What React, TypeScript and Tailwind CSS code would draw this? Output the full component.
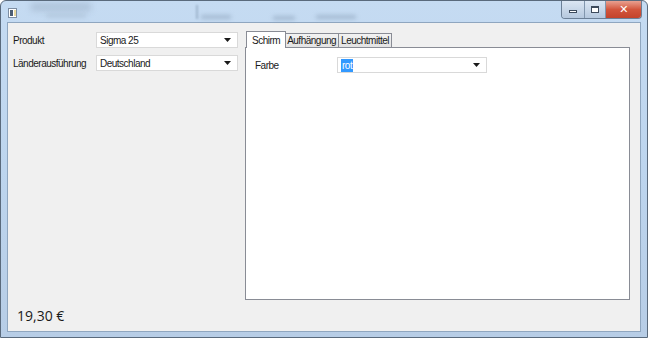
import React from 'react'

function Combo({ value, width, selected }: { value: string; width: string; selected?: boolean }) {
  return (
    <div
      className={`flex h-[16px] items-center justify-between border border-[#d9d9d9] bg-white pl-[3px] pr-[6px] ${width}`}
    >
      {selected ? (
        <span className="bg-[#3399ff] px-[1px] leading-[13px] text-white">{value}</span>
      ) : (
        <span className="leading-[13px] text-[#1a1a1a]">{value}</span>
      )}
      <svg width="7" height="4" viewBox="0 0 7 4">
        <path d="M0 0h7L3.5 4z" fill="#1a1a1a" />
      </svg>
    </div>
  )
}

function Tab({ label, active }: { label: string; active?: boolean }) {
  if (active) {
    return (
      <div className="relative z-10 -mb-px -mr-[1px] flex h-[17px] items-center border border-b-0 border-[#898c95] bg-white px-[5px]">
        {label}
      </div>
    )
  }
  return (
    <div className="mt-[2px] -ml-px flex h-[14px] items-center border border-b-0 border-[#898c95] bg-gradient-to-b from-[#f2f2f2] to-[#e3e3e3] px-[2px]">
      {label}
    </div>
  )
}

export default function App() {
  return (
    <div
      className="relative h-[338px] w-[648px] overflow-hidden rounded-t-[6px] border border-[#5a6a7c] bg-gradient-to-b from-[#c5dbf2] via-[#bdd5ee] to-[#b7cde6] text-[10px] tracking-[-0.5px] text-[#1a1a1a]"
      style={{ fontFamily: '"Liberation Sans", Arial, sans-serif' }}
    >
      {/* title bar */}
      <div className="relative flex h-[21px] items-start justify-between">
        <div className="pointer-events-none absolute inset-0">
          <div className="absolute left-[30px] top-[2px] h-[8px] w-[60px] bg-[#9fb3c9] opacity-60 blur-[3px]" />
          <div className="absolute left-[45px] top-[12px] h-[5px] w-[40px] bg-[#a9bdd2] opacity-50 blur-[2px]" />
          <div className="absolute left-[195px] top-[4px] h-[14px] w-[2px] bg-[#8ea4bc] opacity-70 blur-[1px]" />
          <div className="absolute left-[200px] top-[14px] h-[4px] w-[30px] bg-[#8ea4bc] opacity-60 blur-[2px]" />
          <div className="absolute left-[272px] top-[15px] h-[4px] w-[22px] bg-[#8ea4bc] opacity-60 blur-[2px]" />
          <div className="absolute left-[315px] top-[14px] h-[4px] w-[40px] bg-[#8ea4bc] opacity-60 blur-[2px]" />
        </div>
        <div className="relative ml-[7px] mt-[7px] flex h-[10px] w-[9px] items-center gap-[1px] border border-[#7d8ea3] bg-white">
          <div className="ml-[1px] h-[6px] w-[3px] bg-[#4b5d73]" />
          <div className="h-[6px] w-[3px] bg-[#e8d9a0]" />
        </div>
        <div className="relative mr-[5px] flex h-[18px] overflow-hidden rounded-b-[4px] border border-t-0 border-[#6b7f96]">
          <div className="flex w-[23px] items-center justify-center border-r border-[#8196ad] bg-gradient-to-b from-[#dbe6f3] to-[#b5c8de]">
            <div className="mt-[3px] h-[3px] w-[8px] border border-[#3c4a5c] bg-white" />
          </div>
          <div className="flex w-[21px] items-center justify-center border-r border-[#8196ad] bg-gradient-to-b from-[#dbe6f3] to-[#b5c8de]">
            <div className="h-[7px] w-[8px] border border-[#3c4a5c] border-t-2 bg-white" />
          </div>
          <div className="flex w-[35px] items-center justify-center bg-gradient-to-b from-[#e8a090] via-[#d2553c] to-[#c4432b]">
            <span className="text-[11px] font-bold leading-none text-white" style={{ fontFamily: '"DejaVu Sans", sans-serif' }}>
              ✕
            </span>
          </div>
        </div>
      </div>

      {/* client area */}
      <div className="mx-[6px] flex h-[310px] flex-col border border-[#8fa6bf] bg-[#f0f0f0]">
        <div className="flex pt-[8px]">
          <div className="flex w-[236px] flex-col gap-[7px] pl-[5px] pt-[1px]">
            <div className="flex items-center">
              <span className="w-[83px]">Produkt</span>
              <Combo value="Sigma 25" width="w-[142px]" />
            </div>
            <div className="flex items-center">
              <span className="w-[83px]">Länderausführung</span>
              <Combo value="Deutschland" width="w-[142px]" />
            </div>
          </div>

          <div className="ml-[1px] flex flex-col">
            <div className="flex pl-[1px]">
              <Tab label="Schirm" active />
              <Tab label="Aufhängung" />
              <Tab label="Leuchtmittel" />
            </div>
            <div className="h-[253px] w-[385px] border border-[#898c95] bg-white px-[9px] pt-[9px]">
              <div className="flex items-center">
                <span className="w-[82px]">Farbe</span>
                <Combo value="rot" width="w-[150px]" selected />
              </div>
            </div>
          </div>
        </div>

        <div
          className="ml-[9px] mt-[5px] text-[14px] tracking-normal text-[#1a1a1a]"
          style={{ fontFamily: '"Open Sans", "DejaVu Sans", sans-serif' }}
        >
          19,30 €
        </div>
      </div>
    </div>
  )
}
